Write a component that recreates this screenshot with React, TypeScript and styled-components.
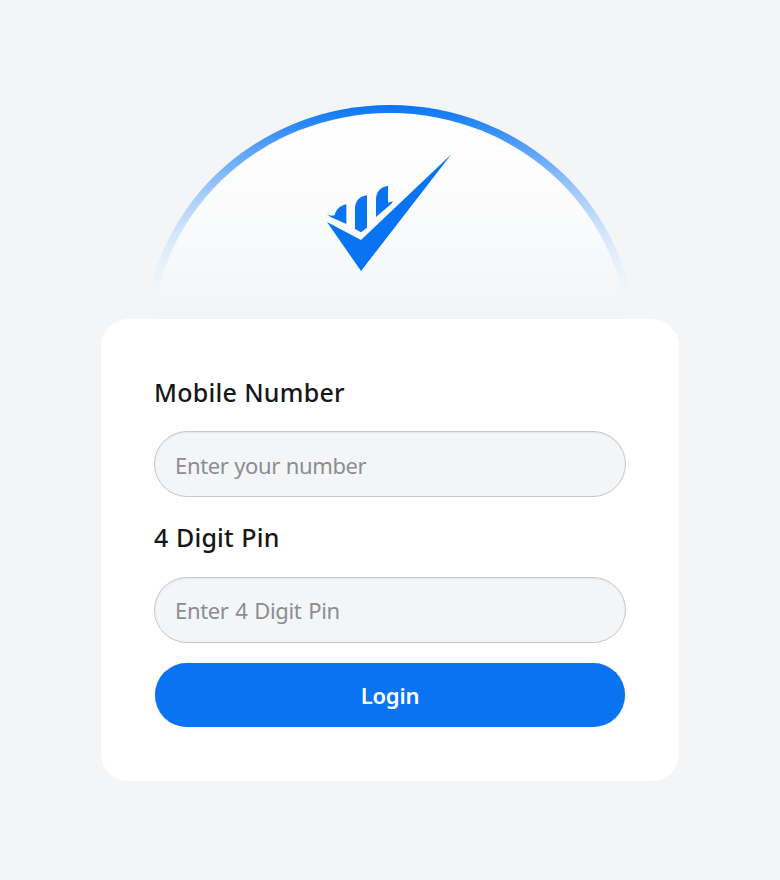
import React from "react";
import styled, { createGlobalStyle } from "styled-components";

const GlobalStyle = createGlobalStyle`
  *, *::before, *::after { box-sizing: border-box; }
  body {
    margin: 0;
    background: #f3f5f7;
    font-family: "Segoe UI", "Noto Sans", "Open Sans", sans-serif;
  }
`;

const Page = styled.main`
  min-height: 880px;
  padding-top: 105px;
  display: flex;
  flex-direction: column;
  align-items: center;
`;

const Hero = styled.header`
  width: 496px;
  height: 214px;
  display: grid;
  grid-template: 214px / 496px;
  > * { grid-area: 1 / 1; }
`;

const Arch = styled.svg`
  display: block;
  width: 496px;
  height: 214px;
`;

const Logo = styled.svg`
  display: block;
  width: 160px;
  height: 140px;
  justify-self: center;
  margin-top: 35px;
`;

const Card = styled.form`
  width: 578px;
  height: 462px;
  padding: 55px 53px 0;
  background: #fff;
  border-radius: 27px;
  display: flex;
  flex-direction: column;
`;

const Label = styled.label<{ $letter: number; $word: number }>`
  height: 36px;
  line-height: 36px;
  font-size: 25px;
  font-weight: 500;
  letter-spacing: ${(p) => p.$letter}px;
  word-spacing: ${(p) => p.$word}px;
  color: #16171a;
  white-space: nowrap;
`;

const Input = styled.input<{ $above: number; $below: number; $top: number; $word: number }>`
  width: 100%;
  height: 66px;
  margin: ${(p) => p.$above}px 0 ${(p) => p.$below}px;
  padding: ${(p) => p.$top}px 20px 0;
  border: 1px solid #c6c7c9;
  border-radius: 33px;
  background: #f3f5f7;
  box-shadow: inset 0 1px 2px rgba(0, 0, 0, 0.06);
  font: 400 22px "Segoe UI", "Noto Sans", "Open Sans", sans-serif;
  letter-spacing: -0.35px;
  word-spacing: ${(p) => p.$word}px;
  color: #16171a;
  outline: none;
  &::placeholder { color: #8c8d90; opacity: 1; }
`;

const LoginButton = styled.button`
  height: 64px;
  margin: 0 1px;
  padding: 0;
  border: 0;
  border-radius: 32px;
  background: #0874f4;
  box-shadow: 0 0 1px rgba(0, 0, 0, 0.3), 0 2px 6px rgba(0, 0, 0, 0.03);
  color: #fff;
  font: 600 22px "Segoe UI", "Noto Sans", "Open Sans", sans-serif;
  letter-spacing: -0.2px;
`;

export default function App() {
  return (
    <>
      <GlobalStyle />
      <Page>
        <Hero>
          <Arch viewBox="0 0 496 214" aria-hidden="true">
            <defs>
              <linearGradient id="rim" gradientUnits="userSpaceOnUse" x1="0" y1="0" x2="0" y2="214">
                <stop offset="0" stopColor="#0874f4" />
                <stop offset="0.06" stopColor="#2082f6" />
                <stop offset="0.22" stopColor="#5fa5f9" />
                <stop offset="0.42" stopColor="#a4cdfa" />
                <stop offset="0.6" stopColor="#d4e6fa" />
                <stop offset="0.76" stopColor="#ebf2fa" />
                <stop offset="0.88" stopColor="#f3f5f9" />
                <stop offset="1" stopColor="#f3f5f7" />
              </linearGradient>
              <linearGradient id="dome" gradientUnits="userSpaceOnUse" x1="0" y1="0" x2="0" y2="214">
                <stop offset="0" stopColor="#ffffff" />
                <stop offset="0.2" stopColor="#fefefe" />
                <stop offset="0.6" stopColor="#f9fafb" />
                <stop offset="1" stopColor="#f3f4f6" />
              </linearGradient>
            </defs>
            <ellipse cx="248" cy="236" rx="245.5" ry="236" fill="url(#rim)" />
            <ellipse cx="248" cy="236" rx="237.5" ry="228" fill="url(#dome)" />
          </Arch>
          <Logo viewBox="0 0 480 420" fill="#0874f4" role="img" aria-label="Check mark">
            <path d="M51 246 L153 300 L424 43 L153 393 Z" />
            <path d="M51 222 L63 227 L74 226 C78 208 90 197 109 193 V252 L62 231 Z" />
            <path d="M135 267 V204 C136 182 149 169 171 166 V263 L153 277 Z" />
            <path d="M198 231 V176 C200 153 212 141 234 137 V188 L242 186 L249 183 L244 191 Z" />
          </Logo>
        </Hero>
        <Card onSubmit={(e) => e.preventDefault()}>
          <Label htmlFor="mobile" $letter={0.25} $word={0.3}>Mobile Number</Label>
          <Input id="mobile" type="tel" placeholder="Enter your number" $above={21} $below={22} $top={2} $word={0.3} />
          <Label htmlFor="pin" $letter={0.15} $word={1}>4 Digit Pin</Label>
          <Input id="pin" type="password" placeholder="Enter 4 Digit Pin" $above={22} $below={20} $top={0} $word={1.4} />
          <LoginButton type="submit">Login</LoginButton>
        </Card>
      </Page>
    </>
  );
}
